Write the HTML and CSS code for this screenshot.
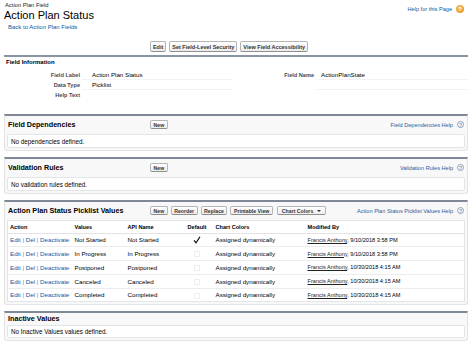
FILE: index.html
```html
<!DOCTYPE html>
<html lang="en">
<head>
    <meta charset="UTF-8">
    <title>Action Plan Status</title>
    <link rel="stylesheet" href="styles.css">
</head>
<body>
    <!-- Page header -->
    <div class="pageHeader">
        <div class="titleBlock">
            <div class="pageType">Action Plan Field</div>
            <h1 class="pageTitle">Action Plan Status</h1>
            <a class="backLink" href="#">Back to Action Plan Fields</a>
        </div>
        <a class="helpLink" href="#">Help for this Page <span class="helpOrb">?</span></a>
    </div>

    <div class="detailButtons">
        <button class="btn">Edit</button>
        <button class="btn">Set Field-Level Security</button>
        <button class="btn">View Field Accessibility</button>
    </div>

    <!-- Field Information -->
    <div class="detailBlock">
        <h3 class="sectionHeader">Field Information</h3>
        <div class="detailGrid">
            <div class="label">Field Label</div>
            <div class="value">Action Plan Status</div>
            <div class="label">Field Name</div>
            <div class="value right">ActionPlanState</div>

            <div class="label">Data Type</div>
            <div class="value">Picklist</div>
            <div class="label"></div>
            <div class="value right"></div>

            <div class="label">Help Text</div>
            <div class="value last"></div>
            <div class="label"></div>
            <div class="value right last"></div>
        </div>
    </div>

    <!-- Field Dependencies -->
    <div class="relatedList">
        <div class="listHeader">
            <h3>Field Dependencies</h3>
            <div class="listButtons"><button class="btn small">New</button></div>
            <a class="listHelp" href="#">Field Dependencies Help <span class="helpIcon">?</span></a>
        </div>
        <div class="listBody">No dependencies defined.</div>
    </div>

    <!-- Validation Rules -->
    <div class="relatedList">
        <div class="listHeader">
            <h3>Validation Rules</h3>
            <div class="listButtons"><button class="btn small">New</button></div>
            <a class="listHelp" href="#">Validation Rules Help <span class="helpIcon">?</span></a>
        </div>
        <div class="listBody">No validation rules defined.</div>
    </div>

    <!-- Picklist values -->
    <div class="relatedList">
        <div class="listHeader">
            <h3>Action Plan Status Picklist Values</h3>
            <div class="listButtons">
                <button class="btn small">New</button>
                <button class="btn small">Reorder</button>
                <button class="btn small">Replace</button>
                <button class="btn small">Printable View</button>
                <button class="btn small select">Chart Colors <span class="caret"></span></button>
            </div>
            <a class="listHelp" href="#">Action Plan Status Picklist Values Help <span class="helpIcon">?</span></a>
        </div>
        <table class="valuesTable">
            <colgroup>
                <col style="width:65px">
                <col style="width:53px">
                <col style="width:59px">
                <col style="width:25px">
                <col style="width:96px">
                <col>
            </colgroup>
            <thead>
                <tr>
                    <th>Action</th>
                    <th>Values</th>
                    <th>API Name</th>
                    <th class="center">Default</th>
                    <th class="colors">Chart Colors</th>
                    <th>Modified By</th>
                </tr>
            </thead>
            <tbody>
                <tr>
                    <td class="actions"><a href="#">Edit</a> | <a href="#">Del</a> | <a href="#">Deactivate</a></td>
                    <td>Not Started</td>
                    <td>Not Started</td>
                    <td class="center">
                        <svg class="check" width="8" height="8" viewBox="0 0 8 8"><path d="M1 4.4 L3 6.8 L7 0.8" fill="none" stroke="#000" stroke-width="1.1"/></svg>
                    </td>
                    <td class="colors">Assigned dynamically</td>
                    <td class="modified"><a class="user" href="#">Francis Anthony</a>, 9/10/2018 3:58 PM</td>
                </tr>
                <tr>
                    <td class="actions"><a href="#">Edit</a> | <a href="#">Del</a> | <a href="#">Deactivate</a></td>
                    <td>In Progress</td>
                    <td>In Progress</td>
                    <td class="center"><span class="box"></span></td>
                    <td class="colors">Assigned dynamically</td>
                    <td class="modified"><a class="user" href="#">Francis Anthony</a>, 9/10/2018 3:58 PM</td>
                </tr>
                <tr>
                    <td class="actions"><a href="#">Edit</a> | <a href="#">Del</a> | <a href="#">Deactivate</a></td>
                    <td>Postponed</td>
                    <td>Postponed</td>
                    <td class="center"><span class="box"></span></td>
                    <td class="colors">Assigned dynamically</td>
                    <td class="modified"><a class="user" href="#">Francis Anthony</a>, 10/30/2018 4:15 AM</td>
                </tr>
                <tr>
                    <td class="actions"><a href="#">Edit</a> | <a href="#">Del</a> | <a href="#">Deactivate</a></td>
                    <td>Canceled</td>
                    <td>Canceled</td>
                    <td class="center"><span class="box"></span></td>
                    <td class="colors">Assigned dynamically</td>
                    <td class="modified"><a class="user" href="#">Francis Anthony</a>, 10/30/2018 4:15 AM</td>
                </tr>
                <tr>
                    <td class="actions"><a href="#">Edit</a> | <a href="#">Del</a> | <a href="#">Deactivate</a></td>
                    <td>Completed</td>
                    <td>Completed</td>
                    <td class="center"><span class="box"></span></td>
                    <td class="colors">Assigned dynamically</td>
                    <td class="modified"><a class="user" href="#">Francis Anthony</a>, 10/30/2018 4:15 AM</td>
                </tr>
            </tbody>
        </table>
    </div>

    <!-- Inactive values -->
    <div class="relatedList">
        <div class="listHeader compact">
            <h3>Inactive Values</h3>
        </div>
        <div class="listBody">No Inactive Values values defined.</div>
    </div>
</body>
</html>
```

FILE: styles.css
```css
/* Reset */
* {
    margin: 0;
    padding: 0;
    box-sizing: border-box;
}

body {
    font-family: 'Liberation Sans', Arial, Helvetica, sans-serif;
    font-size: 6.2px;
    color: #000;
    background-color: #fff;
    padding: 2px 6px 0 4px;
}

a {
    color: #015ba7;
    text-decoration: none;
}

/* Page header */
.pageHeader {
    display: flex;
    justify-content: space-between;
    align-items: flex-start;
}

.pageType {
    font-size: 5.8px;
    line-height: 7px;
    padding-left: 1px;
    color: #222;
}

.pageTitle {
    font-size: 11px;
    font-weight: normal;
    line-height: 13px;
}

.backLink {
    display: block;
    font-size: 6px;
    line-height: 7px;
    margin-top: 2px;
    padding-left: 4px;
}

.helpLink {
    display: flex;
    align-items: center;
    gap: 4px;
    font-size: 5.6px;
    margin-top: 3px;
    margin-right: 4px;
}

.helpOrb {
    width: 8px;
    height: 8px;
    border-radius: 50%;
    background: radial-gradient(circle at 40% 35%, #f8c45f, #e08a1a);
    color: #fff;
    font-weight: bold;
    font-size: 6px;
    display: flex;
    align-items: center;
    justify-content: center;
}

/* Buttons */
.btn {
    font-family: inherit;
    font-size: 5.5px;
    font-weight: bold;
    color: #333;
    height: 11px;
    padding: 0 2px;
    background: linear-gradient(#fff, #ededed);
    border: 1px solid #b5b5b5;
    border-bottom-color: #8f8f8f;
    border-radius: 2px;
}

.btn.small {
    font-size: 5.2px;
    height: 9px;
    padding: 0 2.5px;
}

.btn.select {
    display: flex;
    align-items: center;
    gap: 4px;
    padding: 0 4px;
    margin-left: 1px;
}

.caret {
    width: 0;
    height: 0;
    border-left: 2px solid transparent;
    border-right: 2px solid transparent;
    border-top: 2.5px solid #333;
}

.detailButtons {
    display: flex;
    justify-content: center;
    gap: 3px;
    margin-top: 10px;
    padding-right: 14px;
}

/* Field Information */
.detailBlock {
    margin-top: 3px;
    border-top: 2px solid #8a94a3;
    padding-bottom: 14px;
}

.sectionHeader {
    font-size: 6px;
    line-height: 10px;
    padding-left: 2px;
}

.detailGrid {
    display: grid;
    grid-template-columns: 78px 150px 84px 1fr;
    grid-auto-rows: 10px;
    margin-top: 3px;
    align-items: center;
}

.detailGrid .label {
    font-size: 5.6px;
    font-weight: bold;
    color: #4a4a56;
    text-align: right;
    padding-right: 2px;
}

.detailGrid .value {
    font-size: 6.2px;
    padding-left: 10px;
    height: 100%;
    display: flex;
    align-items: center;
    border-bottom: 1px solid #f3f3f3;
}

.detailGrid .value.right {
    padding-left: 5px;
}

.detailGrid .value.last {
    border-bottom: none;
}

/* Related lists */
.relatedList {
    background-color: #f8f8f8;
    border: 1px solid #e3e3e3;
    border-top: 2px solid #7e8896;
    border-radius: 0 0 3px 3px;
    padding: 0 2px 2px;
    margin-bottom: 6px;
}

.listHeader {
    display: flex;
    align-items: center;
    height: 17px;
}

.listHeader.compact {
    height: 11px;
}

.listHeader h3 {
    flex: 0 0 143px;
    font-size: 7.2px;
    padding-left: 1px;
}

.listButtons {
    display: flex;
    gap: 3px;
}

.listHelp {
    margin-left: auto;
    display: flex;
    align-items: center;
    gap: 4px;
    font-size: 5.6px;
    color: #2b5b9a;
}

.helpIcon {
    width: 7px;
    height: 7px;
    border-radius: 50%;
    border: 1px solid #8ea2be;
    color: #7d91ae;
    font-size: 5px;
    font-weight: bold;
    display: flex;
    align-items: center;
    justify-content: center;
    margin-right: 1px;
}

.listBody {
    background-color: #fff;
    border: 1px solid #e3e6e8;
    border-radius: 2px;
    height: 14px;
    margin-top: 1px;
    padding-left: 3px;
    display: flex;
    align-items: center;
    font-size: 6.3px;
}

.listHeader.compact + .listBody {
    height: 13px;
}

/* Picklist values table */
.valuesTable {
    width: 100%;
    table-layout: fixed;
    border-collapse: collapse;
    background-color: #fff;
    border: 1px solid #e3e6e8;
    margin-top: 1px;
}

.valuesTable th {
    height: 12.5px;
    font-size: 5.6px;
    text-align: left;
    padding-left: 2px;
    border-bottom: 1px solid #e3e3e3;
    white-space: nowrap;
}

.valuesTable td {
    height: 13.75px;
    padding-left: 2px;
    border-bottom: 1px solid #ececec;
    white-space: nowrap;
}

.valuesTable tr:last-child td {
    border-bottom: none;
}

.valuesTable .center {
    text-align: center;
    padding-left: 0;
}

.valuesTable .colors {
    padding-left: 6px;
}

.valuesTable .modified {
    font-size: 5.6px;
}

.actions {
    color: #6c87a8;
}

.user {
    color: #222;
    text-decoration: underline;
}

.check {
    display: block;
    margin: 0 auto;
}

.box {
    display: inline-block;
    width: 6px;
    height: 6px;
    border: 1px solid #eeeeee;
    vertical-align: middle;
}
```
